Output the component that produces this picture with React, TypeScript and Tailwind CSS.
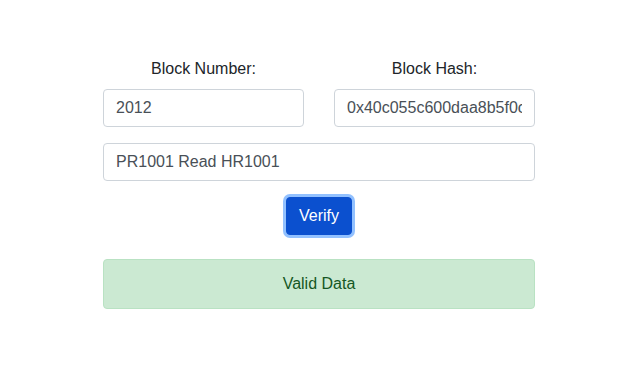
export default function App() {
  return (
    <div className="min-h-[373px] bg-white font-['Liberation_Sans',Arial,sans-serif] text-[16px] text-[#212529]">
      <div className="ml-[103px] w-[432px] pt-[57px]">
        <div className="grid grid-cols-[201px_201px] gap-x-[30px]">
          <div className="flex flex-col">
            <label className="mb-2 h-6 text-center leading-6">Block Number:</label>
            <input
              readOnly
              value="2012"
              className="h-[38px] w-full rounded border border-[#ced4da] px-3 leading-6 text-[#495057] outline-none"
            />
          </div>
          <div className="flex flex-col">
            <label className="mb-2 h-6 text-center leading-6">Block Hash:</label>
            <input
              readOnly
              value="0x40c055c600daa8b5f0c1e2d3"
              className="h-[38px] w-full rounded border border-[#ced4da] px-3 leading-6 text-[#495057] outline-none"
            />
          </div>
        </div>
        <input
          readOnly
          value="PR1001 Read HR1001"
          className="mt-4 block h-[38px] w-full rounded border border-[#ced4da] px-3 leading-6 text-[#495057] outline-none"
        />
        <div className="mt-4 flex justify-center">
          <button className="h-[38px] rounded border border-[#0b50cf] bg-[#0b50cf] px-3 leading-6 text-white shadow-[0_0_0_3px_rgba(38,132,255,0.5)]">
            Verify
          </button>
        </div>
        <div className="mt-6 flex h-[50px] items-center justify-center rounded border border-[#b9e2c3] bg-[#cbe9d2] text-[#155724]">
          Valid Data
        </div>
      </div>
    </div>
  );
}
